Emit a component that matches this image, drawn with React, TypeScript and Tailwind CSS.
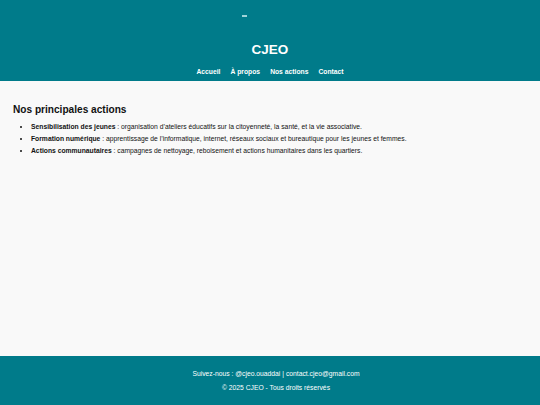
const actions = [
  {
    title: 'Sensibilisation des jeunes',
    text: " : organisation d’ateliers éducatifs sur la citoyenneté, la santé, et la vie associative.",
  },
  {
    title: 'Formation numérique',
    text: " : apprentissage de l’informatique, internet, réseaux sociaux et bureautique pour les jeunes et femmes.",
  },
  {
    title: 'Actions communautaires',
    text: ' : campagnes de nettoyage, reboisement et actions humanitaires dans les quartiers.',
  },
];

const navLinks = ['Accueil', 'À propos', 'Nos actions', 'Contact'];

export default function App() {
  return (
    <div className="flex h-[405px] w-[540px] flex-col bg-[#f9f9f9] font-['Liberation_Sans',Arial,sans-serif] text-[#111]">
      <header className="flex h-[81px] shrink-0 flex-col items-center bg-[#007b8a] text-white">
        {/* broken logo image */}
        <div className="mt-[15px] mr-[51px] h-[2px] w-[5px] bg-[#9fd3d8]" />
        <h1 className="mt-[25px] text-[13.5px] leading-[16px] font-bold">CJEO</h1>
        <nav className="mt-[10px] flex gap-[10px] text-[6.75px] leading-[8px] font-bold">
          {navLinks.map((l) => (
            <a key={l} href="#">
              {l}
            </a>
          ))}
        </nav>
      </header>

      <main className="flex-1 px-[13px] pt-[23px]">
        <h2 className="text-[10.125px] leading-[12px] font-bold">Nos principales actions</h2>
        <ul className="mt-[7px] list-disc pl-[18px] text-[6.75px] leading-[8px]">
          {actions.map((a) => (
            <li key={a.title} className="mb-[4px]">
              <strong>{a.title}</strong>
              {a.text}
            </li>
          ))}
        </ul>
      </main>

      <footer className="flex h-[49px] shrink-0 flex-col items-center justify-center gap-[6px] bg-[#007b8a] pl-[12px] text-[6.75px] leading-[8px] text-white">
        <p>Suivez-nous : @cjeo.ouaddai | contact.cjeo@gmail.com</p>
        <p>© 2025 CJEO - Tous droits réservés</p>
      </footer>
    </div>
  );
}
